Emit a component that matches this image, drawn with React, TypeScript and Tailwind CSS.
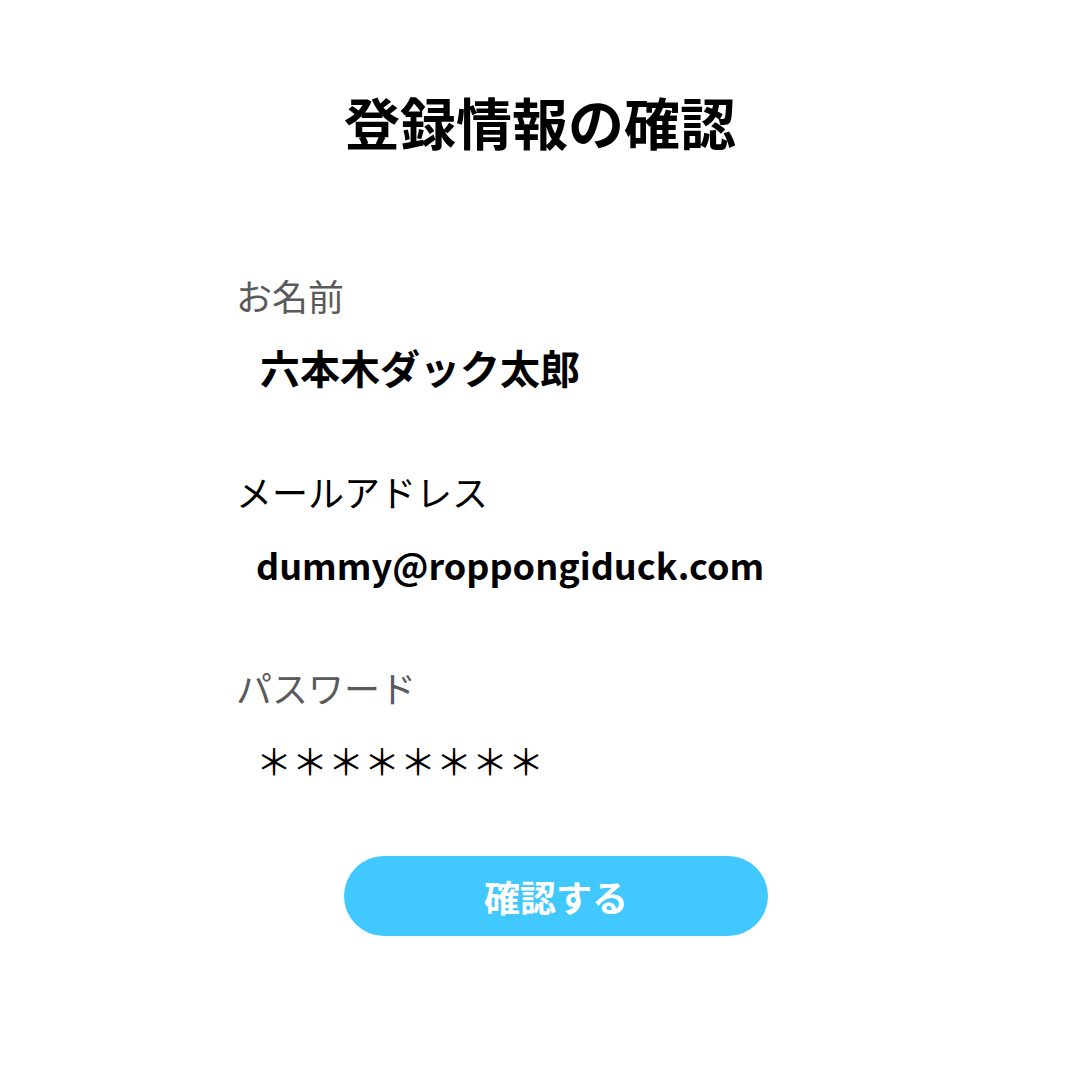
export default function App() {
  const font = { fontFamily: '"Noto Sans CJK JP", "Noto Sans", sans-serif' };
  return (
    <div className="min-h-[1080px] w-[1080px] bg-white text-black" style={font}>
      <h1 className="pt-[93px] text-center text-[56px] font-bold leading-[56px]">登録情報の確認</h1>
      <div className="ml-[236px] flex w-[640px] flex-col">
        <div className="mt-[128px] flex flex-col gap-[34px]">
          <p className="text-[36px] leading-[36px] text-[#5a5a5a]">お名前</p>
          <p className="pl-[24px] text-[40px] font-bold leading-[40px]">六本木ダック太郎</p>
        </div>
        <div className="mt-[86px] flex flex-col gap-[35px]">
          <p className="text-[36px] leading-[36px] text-black">メールアドレス</p>
          <p className="pl-[20px] text-[36px] font-bold leading-[40px]">dummy@roppongiduck.com</p>
        </div>
        <div className="mt-[85px] flex flex-col gap-[37px]">
          <p className="text-[36px] leading-[36px] text-[#5a5a5a]">パスワード</p>
          <p className="pl-[20px] text-[36px] leading-[36px]">＊＊＊＊＊＊＊＊</p>
        </div>
        <button className="mx-auto mt-[78px] h-[80px] w-[424px] rounded-full bg-[#40c8ff] text-[36px] font-bold text-white">
          確認する
        </button>
      </div>
    </div>
  );
}
